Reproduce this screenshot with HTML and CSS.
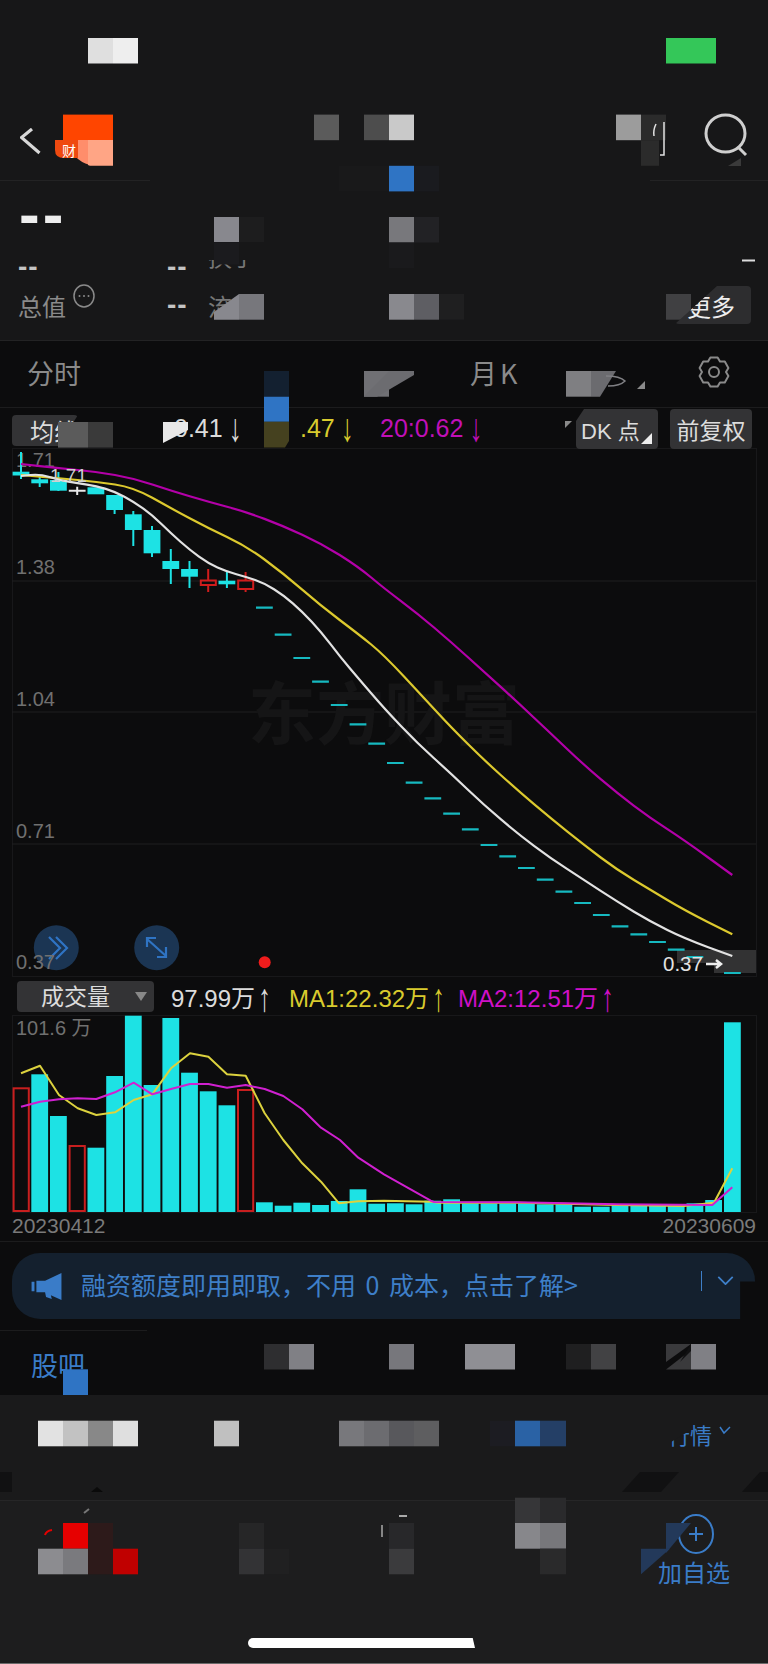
FILE: index.html
```html
<!DOCTYPE html>
<html lang="zh-CN">
<head>
<meta charset="utf-8">
<title>K线</title>
<link rel="stylesheet" href="styles.css">
</head>
<body>
<div class="app">
  <header class="top">
    <div class="status"></div>
    <div class="navbar">
      <svg class="back" viewBox="0 0 22 28"><path d="M12 1 L1.5 9.5 L19.5 25"/></svg>
      <span class="logo-text">财</span>
      <svg class="search" viewBox="0 0 44 44"><ellipse cx="21.5" cy="20.5" rx="19.5" ry="18.5"/><path d="M34 34 L42 42"/></svg>
    </div>
    <div class="quote">
      <div class="price">--</div>
      <div class="qrow first">
        <span class="qlabel qdash">--</span><span class="qval">--</span><span class="qname">换手</span>
      </div>
      <div class="qrow last-row">
        <span class="qlabel">总值<svg class="info" viewBox="0 0 22 24"><ellipse cx="11" cy="12" rx="10" ry="11"/><circle cx="6.5" cy="12" r="1"/><circle cx="11" cy="12" r="1"/><circle cx="15.5" cy="12" r="1"/></svg></span>
        <span class="qval">--</span><span class="qname">流</span>
        <button class="more">更多</button>
      </div>
    </div>
  </header>

  <nav class="tabs">
    <span class="tab">分时</span>
    <span class="tab month">月K</span>
    <svg class="gear" viewBox="0 0 34 32"><path d="M13.4 2.4 L20.6 2.4 L23 6.6 L27.8 6.6 L31.4 12.9 L29 17 L31.4 21.1 L27.8 27.4 L23 27.4 L20.6 31.6 L13.4 31.6 L11 27.4 L6.2 27.4 L2.6 21.1 L5 17 L2.6 12.9 L6.2 6.6 L11 6.6 Z" transform="translate(0,-1)"/><circle cx="17" cy="16" r="5"/></svg>
  </nav>

  <div class="mabar">
    <span class="chip chip-ma">均线</span>
    <span class="ma ma5">0.41<i>↓</i></span>
    <span class="ma ma10">.47<i>↓</i></span>
    <span class="ma ma20">20:0.62<i>↓</i></span>
    <span class="chip chip-dk">DK 点<b class="corner"></b></span>
    <span class="chip chip-fq">前复权</span>
  </div>

  <svg class="price-chart" viewBox="0 448 768 529">
    <rect class="frame" x="12.5" y="448.5" width="744" height="528"/>
    <path class="grid" d="M12 581H756M12 712H756M12 844H756"/>
    <text class="watermark" x="248" y="739">东方财富</text>

    <circle class="fab" cx="56.3" cy="947.7" r="22.5"/>
    <circle class="fab" cx="156.7" cy="947.7" r="22.5"/>
    <path class="fab-icon" d="M49 937L60 948L49 959M56 937L67 948L56 959"/>
    <path class="fab-icon" d="M147 939L166 956M147 947V938H156M166 947V957H157"/>

    <text class="axis" x="16" y="467">1.71</text>
    <text class="axis" x="16" y="574">1.38</text>
    <text class="axis" x="16" y="706">1.04</text>
    <text class="axis" x="16" y="838">0.71</text>
    <text class="axis" x="16" y="969">0.37</text>

    <path class="last-band" d="M677 950H756V973H714V963H677Z"/>

    <g class="wick-up">
      <path d="M21 452V479M39.7 475V487M58.4 472V491M114.6 495V514M133.3 511V546M152 526V557M170.8 549V584M189.5 561V588M226.9 572V588"/>
    </g>
    <g class="body-up">
      <rect x="12.6" y="471.7" width="16.8" height="3.8"/>
      <rect x="31.3" y="479.3" width="16.8" height="4"/>
      <rect x="50" y="480" width="16.8" height="10.7"/>
      <rect x="87.5" y="487.3" width="16.8" height="7"/>
      <rect x="106.2" y="495" width="16.8" height="15"/>
      <rect x="124.9" y="514.3" width="16.8" height="15.7"/>
      <rect x="143.6" y="530" width="16.8" height="23.3"/>
      <rect x="162.4" y="561" width="16.8" height="8"/>
      <rect x="181.1" y="569" width="16.8" height="7.7"/>
      <rect x="218.5" y="580.7" width="16.8" height="3.6"/>
    </g>
    <path class="cross" d="M68.8 490.7H85.6M77.2 486.7V495"/>
    <path class="wick-down" d="M208.2 569V580M208.2 585V592M245.6 572V580M245.6 589V592"/>
    <rect class="body-down" x="200.8" y="580.5" width="15" height="4.5"/>
    <rect class="body-down" x="238.2" y="580.5" width="15" height="8.5"/>
    <path class="dash" d="M256 607.7h16.8M274.7 634.7h16.8M293.4 658h16.8M312.1 681.7h16.8M330.8 705h16.8M349.6 724.3h16.8M368.3 743.7h16.8M387 763h16.8M405.7 782.7h16.8M424.4 798.3h16.8M443.2 813.7h16.8M461.9 829.3h16.8M480.6 845h16.8M499.3 856.3h16.8M518 868h16.8M536.8 879.7h16.8M555.5 891.7h16.8M574.2 903h16.8M592.9 915h16.8M611.6 926.3h16.8M630.4 934.3h16.8M649.1 942h16.8M667.8 949.7h16.8M686.5 957h16.8M724 973h16.8"/>

    <path class="line magenta" d="M21 464 L40 466.2 Q59 468.3 77.7 470 Q96.3 471.7 115 475 Q133.7 478.3 152.3 484.5 Q171 490.7 189.7 496.2 Q208.4 501.7 227 506.7 Q245.7 511.7 264.5 518.9 Q283.3 526 302.2 534.7 Q321 543.3 339.7 555 Q358.3 566.7 371.2 577.5 Q384 588.3 400.7 600.8 Q417.3 613.3 434 627.5 Q450.7 641.7 467.4 656.7 Q484 671.7 500.7 686.9 Q517.3 702 534 717.7 Q550.7 733.3 567.4 749.2 Q584 765 600.7 779.2 Q617.3 793.3 634 805.8 Q650.7 818.3 667.4 829.2 Q684 840 708.2 857.5 L732.3 875"/>
    <path class="line yellow" d="M21 475 L40 476.6 Q59 478.3 77.7 480 Q96.3 481.7 115 484.5 Q133.7 487.3 152.3 497.8 Q171 508.3 189.7 518.3 Q208.4 528.3 227 537 Q245.7 545.7 264.5 559.5 Q283.3 573.3 302.2 589.7 Q321 606 339.7 620 Q358.3 634 371.2 644.5 Q384 655 404 676.5 Q424 698 437.4 712.5 Q450.7 727 467.4 743.5 Q484 760 500.7 775 Q517.3 790 534 804.2 Q550.7 818.3 567.4 831.7 Q584 845 600.7 857.5 Q617.3 870 634 880 Q650.7 890 667.4 900 Q684 910 708.2 922.2 L732.3 934.3"/>
    <path class="line white" d="M21 476 L30.5 475 Q40 474 49.5 477 Q59 480 68.4 481.7 Q77.7 483.3 87 484.7 Q96.3 486 105.7 488.9 Q115 491.7 124.4 496.7 Q133.7 501.7 143 508.4 Q152.3 515 161.7 524.2 Q171 533.3 180.5 541.7 Q190 550 199 556.7 Q208 563.3 217.5 567.5 Q227 571.7 236.4 574.2 Q245.7 576.7 255.2 580 Q264.7 583.3 274 589.2 Q283.3 595 292.8 603.4 Q302.3 611.7 311.7 621.7 Q321 631.7 330.5 644.2 Q340 656.7 349.2 667.5 Q358.3 678.3 371.2 693.3 Q384 708.3 400.7 725.8 Q417.3 743.3 434 758.3 Q450.7 773.3 467.4 789.2 Q484 805 500.7 819.2 Q517.3 833.3 534 845.8 Q550.7 858.3 567.4 869.2 Q584 880 600.7 890.9 Q617.3 901.7 634 911.7 Q650.7 921.7 667.4 930 Q684 938.3 708.2 947.2 L732.3 956"/>

    <text class="axis-high" x="50" y="482">1.71</text>

    <text class="last" x="663" y="971">0.37</text>
    <path class="last-arrow" d="M706 964H720M716 960L721 964L716 968"/>
    <circle class="dot" cx="264.7" cy="962.3" r="6"/>
  </svg>

  <div class="volbar">
    <span class="chip chip-vol">成交量<b class="caret"></b></span>
    <span class="vol v1">97.99万<i>↑</i></span>
    <span class="vol v2">MA1:22.32万<i>↑</i></span>
    <span class="vol v3">MA2:12.51万<i>↑</i></span>
  </div>

  <svg class="vol-chart" viewBox="0 1015 768 226">
    <rect class="frame" x="12.5" y="1015.5" width="744" height="197"/>
    <text class="axis" x="16" y="1035">101.6 万</text>
    <g class="bar">
      <rect x="31.3" y="1074.3" width="16.8" height="137.7"/>
      <rect x="50" y="1116" width="16.8" height="96"/>
      <rect x="87.5" y="1147.7" width="16.8" height="64.3"/>
      <rect x="106.2" y="1076" width="16.8" height="136"/>
      <rect x="124.9" y="1015.7" width="16.8" height="196.3"/>
      <rect x="143.6" y="1085" width="16.8" height="127"/>
      <rect x="162.4" y="1018" width="16.8" height="194"/>
      <rect x="181.1" y="1072.7" width="16.8" height="139.3"/>
      <rect x="199.8" y="1091.3" width="16.8" height="120.7"/>
      <rect x="218.5" y="1105.3" width="16.8" height="106.7"/>
      <rect x="256" y="1202.3" width="16.8" height="9.7"/>
      <rect x="274.7" y="1205.7" width="16.8" height="6.3"/>
      <rect x="293.4" y="1202.7" width="16.8" height="9.3"/>
      <rect x="312.1" y="1205" width="16.8" height="7"/>
      <rect x="330.8" y="1201" width="16.8" height="11"/>
      <rect x="349.6" y="1189.3" width="16.8" height="22.7"/>
      <rect x="368.3" y="1203.7" width="16.8" height="8.3"/>
      <rect x="387" y="1203.3" width="16.8" height="8.7"/>
      <rect x="405.7" y="1204.3" width="16.8" height="7.7"/>
      <rect x="424.4" y="1200.7" width="16.8" height="11.3"/>
      <rect x="443.2" y="1199.3" width="16.8" height="12.7"/>
      <rect x="461.9" y="1203.3" width="16.8" height="8.7"/>
      <rect x="480.6" y="1203.3" width="16.8" height="8.7"/>
      <rect x="499.3" y="1203.3" width="16.8" height="8.7"/>
      <rect x="518" y="1203.3" width="16.8" height="8.7"/>
      <rect x="536.8" y="1204.3" width="16.8" height="7.7"/>
      <rect x="555.5" y="1204.3" width="16.8" height="7.7"/>
      <rect x="574.2" y="1206.7" width="16.8" height="5.3"/>
      <rect x="592.9" y="1206.7" width="16.8" height="5.3"/>
      <rect x="611.6" y="1205" width="16.8" height="7"/>
      <rect x="630.4" y="1205" width="16.8" height="7"/>
      <rect x="649.1" y="1205.7" width="16.8" height="6.3"/>
      <rect x="667.8" y="1205" width="16.8" height="7"/>
      <rect x="686.5" y="1203.3" width="16.8" height="8.7"/>
      <rect x="705.2" y="1200" width="16.8" height="12"/>
      <rect x="724" y="1022.3" width="16.8" height="189.7"/>
    </g>
    <g class="bar-down">
      <rect x="13.6" y="1088.3" width="15.2" height="122.7"/>
      <rect x="69.6" y="1146" width="15.2" height="65"/>
      <rect x="238" y="1090" width="15.2" height="121"/>
    </g>
    <polyline class="vline vyellow" points="21,1073.3 40,1065.7 59,1095 77.7,1108.3 96.3,1115 115,1112.3 133.7,1100 152.3,1094.3 171,1068.3 190,1053.3 208.4,1056.7 227,1074.3 245.7,1075.7 264.7,1113.3 283.3,1140 302.3,1163.3 321,1181.7 339,1203.3 358.3,1201.3 384,1200.7 430.7,1201.7 439,1202.7 517,1202.7 617,1205 684,1206 714,1202.7 732.3,1168.3"/>
    <polyline class="vline vmagenta" points="21,1106.7 40,1101.7 59,1099.3 77.7,1098.3 96.3,1099 115,1092.3 133.7,1082.7 152.3,1094.3 171,1089 190,1084 208.4,1084 227,1087.7 245.7,1085 264.7,1089 283.3,1096 302.3,1109.3 321,1127.7 340,1140 358.3,1157.7 384,1174.3 430.7,1200.7 434,1202 517,1202.3 617,1204.3 712.3,1205 732.3,1187.3"/>
    <text class="date" x="12" y="1233">20230412</text>
    <text class="date" x="756" y="1233" text-anchor="end">20230609</text>
  </svg>

  <div class="banner-wrap">
    <div class="banner">
      <svg class="speaker" viewBox="0 0 32 28"><path d="M0 9H3V19H0Z M5 8H14L31 0V28L20 23L21 27L15 25L14 20H5Z"/></svg>
      <span class="banner-text">融资额度即用即取，不用 0 成本，点击了解&gt;</span>
      <span class="banner-sep"></span>
      <svg class="banner-chev" viewBox="0 0 18 10"><path d="M1 1L9 9L17 1"/></svg>
    </div>
  </div>

  <section class="forum"><span class="forum-title">股吧</span></section>

  <section class="panel"><span class="panel-link">行情</span></section>

  <footer class="tabbar">
    <div class="fav">
      <svg class="fav-icon" viewBox="0 0 36 40"><ellipse cx="18" cy="20" rx="17" ry="19"/><path d="M18 13V27M11 20H25"/></svg>
      <span class="fav-label">加自选</span>
    </div>
    <div class="home"></div>
  </footer>

  <svg class="mosaic" viewBox="0 0 768 1664">
    <rect x="88" y="38" width="25" height="25.5" fill="#dfdfdf"/>
    <rect x="113" y="38" width="25" height="25.5" fill="#eeeeee"/>
    <rect x="666" y="38" width="50" height="25.5" fill="#34c759"/>

    <rect x="63" y="114.6" width="50" height="25.6" fill="#ff4500"/>
    <path d="M63 140H88V165H90Q80 162 76 157L63 155Z" fill="#ff8d6b"/>
    <path d="M88 140H113V165.8H90Q88 165 88 165Z" fill="#ffa585"/>
    <path d="M55 140H78V158H64Q55 158 55 150Z" fill="#ef4a10"/>
    <rect x="314" y="114.6" width="25" height="25.6" fill="#5b5b5b"/>
    <rect x="364" y="114.6" width="25" height="25.6" fill="#4d4d4d"/>
    <rect x="389" y="114.6" width="25" height="25.6" fill="#c9c9c9"/>
    <rect x="616" y="114.6" width="25" height="25.6" fill="#9c9c9c"/>
    <rect x="641" y="114.6" width="25" height="25.6" fill="#2b2b2b"/>
    <rect x="641" y="140.2" width="18" height="25.6" fill="#2b2b2b"/>
    <path d="M656 124Q653 130 654 136M664 122V155H660" fill="none" stroke="#e2e2e2" stroke-width="1.5"/>
    <path d="M728 166L741 158V166Z" fill="#3a3a3a"/>
    <rect x="150" y="178" width="500" height="5" fill="#171718"/>
    <rect x="339" y="165.8" width="50" height="25.6" fill="#19191a"/>
    <rect x="389" y="165.8" width="25" height="25.6" fill="#2f74c4"/>
    <rect x="414" y="165.8" width="25" height="25.6" fill="#1a1b1f"/>

    <rect x="214" y="217" width="25" height="25.5" fill="#88888e"/>
    <rect x="239" y="217" width="25" height="25.5" fill="#1d1d1e"/>
    <rect x="389" y="217" width="25" height="25.5" fill="#78787c"/>
    <rect x="414" y="217" width="25" height="25.5" fill="#222225"/>
    <rect x="389" y="242.5" width="25" height="25.5" fill="#1a1a1c"/>
    <rect x="205" y="242" width="60" height="18" fill="#171718"/>
    <rect x="214" y="242.5" width="25" height="22" fill="#1b1b1e"/>
    <rect x="742" y="259.5" width="13" height="2" fill="#dddddd"/>

    <path d="M214 312L239 294V319.7H214Z" fill="#88888e"/>
    <rect x="239" y="294" width="25" height="25.7" fill="#77777c"/>
    <rect x="389" y="294" width="25" height="25.7" fill="#89898e"/>
    <rect x="414" y="294" width="25" height="25.7" fill="#5e5e63"/>
    <rect x="439" y="294" width="25" height="25.7" fill="#1f1f20"/>
    <rect x="666" y="294" width="25" height="25.7" fill="#404042"/>

    <rect x="264" y="371" width="25" height="25.7" fill="#132030"/>
    <rect x="264" y="396.7" width="25" height="25.1" fill="#2f74c4"/>
    <path d="M264 421.8H289V441L285 447.4H264Z" fill="#45411f"/>
    <path d="M364 396.7V371H389V396.7Z" fill="#707074"/>
    <path d="M389 371H414V375L377 396.7H364V396Z" fill="#6c6c70"/>
    <path d="M566 371H591V396.7H566Z" fill="#7f7f82"/>
    <path d="M591 371H616L600 396.7H591Z" fill="#6b6b6f"/>
    <path d="M606 376Q620 376 625 381Q620 386 608 386" fill="none" stroke="#808084" stroke-width="1.5"/>
    <path d="M637 389L645 381V389Z" fill="#8a8a8a"/>

    <rect x="58" y="422" width="30" height="25.6" fill="#5b5b5b"/>
    <rect x="88" y="422" width="25" height="25.6" fill="#3a3a3a"/>
    <path d="M163 422H188V430L163 443Z" fill="#e8e8e8"/>
    <path d="M565 428V421H572Z" fill="#8a8a8a"/>

    <rect x="63" y="1369.3" width="25" height="25.7" fill="#2f74c4"/>
    <rect x="264" y="1344" width="25" height="25.5" fill="#2e2e30"/>
    <rect x="289" y="1344" width="25" height="25.5" fill="#808085"/>
    <rect x="389" y="1344" width="25" height="25.5" fill="#77777c"/>
    <rect x="465" y="1344" width="50" height="25.5" fill="#8f8f94"/>
    <rect x="566" y="1344" width="25" height="25.5" fill="#1f1f20"/>
    <rect x="591" y="1344" width="25" height="25.5" fill="#424244"/>
    <path d="M666 1369.5L691 1350V1369.5Z" fill="#3a3a3c"/>
    <path d="M666 1344H691L666 1362Z" fill="#3a3a3c"/>
    <path d="M691 1344H698L680 1362Z" fill="#111112"/>
    <rect x="691" y="1344" width="25" height="25.5" fill="#808085"/>

    <rect x="38" y="1420.7" width="25" height="25.6" fill="#e2e2e2"/>
    <rect x="63" y="1420.7" width="25" height="25.6" fill="#c2c2c2"/>
    <rect x="88" y="1420.7" width="25" height="25.6" fill="#888888"/>
    <rect x="113" y="1420.7" width="25" height="25.6" fill="#dfdfdf"/>
    <rect x="214" y="1420.7" width="25" height="25.6" fill="#c0c0c0"/>
    <rect x="339" y="1420.7" width="25" height="25.6" fill="#78787c"/>
    <rect x="364" y="1420.7" width="25" height="25.6" fill="#6c6c70"/>
    <rect x="389" y="1420.7" width="25" height="25.6" fill="#58585c"/>
    <rect x="414" y="1420.7" width="25" height="25.6" fill="#5e5e60"/>
    <rect x="490" y="1420.7" width="25" height="25.6" fill="#1c1c22"/>
    <rect x="515" y="1420.7" width="25" height="25.6" fill="#2a62a5"/>
    <rect x="540" y="1420.7" width="26" height="25.6" fill="#243f66"/>
    <path d="M666 1422H691V1430L671 1442H666Z" fill="#1a1a1b"/>
    <path d="M720 1427L724 1433L730 1427" fill="none" stroke="#3a7cc8" stroke-width="1.5"/>

    <path d="M622 1492L640 1472H679L661 1492Z" fill="#111112"/>
    <path d="M742 1492L760 1472H768V1492Z" fill="#111112"/>
    <rect x="0" y="1472" width="12" height="20" fill="#111112"/>
    <path d="M91 1492L97 1487L103 1492Z" fill="#0a0a0a"/>

    <rect x="63" y="1523" width="25" height="25.7" fill="#e60000"/>
    <rect x="88" y="1523" width="25" height="51.3" fill="#2d1a1a"/>
    <rect x="38" y="1548.7" width="25" height="25.6" fill="#8c8c90"/>
    <rect x="63" y="1548.7" width="25" height="25.6" fill="#7a7a7e"/>
    <rect x="113" y="1548.7" width="25" height="25.6" fill="#c00000"/>
    <path d="M45 1535Q46 1531 52 1530" fill="none" stroke="#e60000" stroke-width="2"/>
    <path d="M84 1513L89 1509" fill="none" stroke="#777777" stroke-width="2"/>
    <rect x="239" y="1523" width="25" height="25.7" fill="#262627"/>
    <rect x="239" y="1548.7" width="25" height="25.6" fill="#333335"/>
    <rect x="264" y="1548.7" width="25" height="25.6" fill="#202021"/>
    <rect x="389" y="1523" width="25" height="25.7" fill="#28282a"/>
    <rect x="389" y="1548.7" width="25" height="25.6" fill="#3b3b3d"/>
    <path d="M382 1525V1537" fill="none" stroke="#aaaaaa" stroke-width="1.5"/>
    <path d="M399 1516H407" fill="none" stroke="#aaaaaa" stroke-width="2"/>
    <rect x="515" y="1497.7" width="25" height="25.3" fill="#363638"/>
    <rect x="540" y="1497.7" width="26" height="25.3" fill="#2a2a2c"/>
    <rect x="515" y="1523" width="25" height="25.7" fill="#87878b"/>
    <rect x="540" y="1523" width="26" height="25.7" fill="#77777b"/>
    <rect x="540" y="1548.7" width="26" height="25.6" fill="#2a2a2b"/>
    <path d="M666 1523H691L666 1553Z" fill="#23395a"/>
    <path d="M641 1548.7H670L641 1574.3Z" fill="#23395a"/>
  </svg>
</div>
</body>
</html>
```

FILE: styles.css
```css
* { box-sizing: border-box; margin: 0; padding: 0; }
html, body { background: #0c0c0d; }
body { width: 768px; height: 1664px; overflow: hidden; font-family: "Liberation Sans", "Noto Sans CJK SC", sans-serif; }

.app { position: relative; width: 768px; height: 1664px; display: flex; flex-direction: column; background: #0c0c0d; overflow: hidden; }
i { font-style: normal; }

.top { height: 341px; background: #171718; border-bottom: 1px solid #232324; flex: none; }
.status { height: 100px; }
.navbar { height: 81px; border-bottom: 1px solid #232324; display: flex; align-items: flex-start; padding: 28px 0 0 20px; position: relative; }
.back { width: 22px; height: 28px; fill: none; stroke: #d8d8d8; stroke-width: 3.2; }
.logo-text { position: relative; z-index: 2; color: #fff; font-size: 14px; line-height: 18px; margin: 13px 0 0 20px; font-family: "Noto Sans CJK SC", sans-serif; }
.search { width: 44px; height: 44px; margin: -15px 20px 0 auto; fill: none; stroke: #cfcfcf; stroke-width: 3; }

.quote { padding: 0 18px; }
.price { color: #eee; font-size: 62px; font-weight: 700; line-height: 60px; letter-spacing: 3px; margin-top: 3px; height: 60px; margin-left: 1px; }
.qrow { display: flex; align-items: center; color: #8a8a8a; }
.qrow.first { height: 46px; }
.qrow.last-row { height: 30px; }
.qlabel { width: 149px; font-family: "Noto Sans CJK SC", sans-serif; font-size: 24px; display: flex; align-items: flex-start; }
.qdash { font-family: "Liberation Sans", sans-serif; font-weight: 700; font-size: 28px; color: #c4c4c4; letter-spacing: 1px; }
.info { width: 22px; height: 24px; margin: -4px 0 0 7px; fill: none; stroke: #8a8a8a; stroke-width: 1.5; }
.info circle { fill: #8a8a8a; stroke: none; }
.qval { width: 41px; font-size: 28px; letter-spacing: 1px; color: #c4c4c4; font-weight: 700; }
.qname { font-family: "Noto Sans CJK SC", sans-serif; font-size: 24px; color: #777; }
.first .qname { align-self: flex-start; line-height: 24px; }
.more { position: relative; z-index: 2; margin-left: auto; margin-right: -1px; width: 76px; height: 38px; border: 0; border-radius: 4px; background: #2d2d2f; color: #eee; font-family: "Noto Sans CJK SC", sans-serif; font-size: 24px; text-align: right; padding-right: 16px; clip-path: polygon(42px 0, 100% 0, 100% 100%, 0 100%); }

.tabs { height: 67px; border-bottom: 1px solid #1c1c1d; display: flex; align-items: center; padding: 0 0 4px 27px; flex: none; color: #8a8a8a; }
.tab { font-family: "Noto Sans CJK SC", sans-serif; font-size: 27px; }
.month { margin-left: 389px; letter-spacing: 3px; }
.gear { width: 34px; height: 32px; margin-left: auto; margin-right: 37px; fill: none; stroke: #8a8a8a; stroke-width: 2; stroke-linejoin: round; }

.mabar { height: 40px; display: flex; align-items: center; flex: none; position: relative; }
.chip { display: flex; align-items: center; justify-content: center; background: #333335; color: #dcdcdc; font-family: "Liberation Sans", "Noto Sans CJK SC", sans-serif; border-radius: 4px; flex: none; }
.chip-ma { width: 66px; height: 31px; margin: 5px 0 0 12px; font-size: 24px; justify-content: flex-start; padding-left: 18px; white-space: nowrap; clip-path: polygon(0 0, 100% 0, 70% 100%, 0 100%); }
.ma { font-size: 25px; white-space: nowrap; flex: none; }
.ma i { display: inline-block; font-size: 26px; margin-left: 6px; transform: scale(1, 1.5); }
.ma5 { color: #dcdcdc; margin-left: 96px; width: 126px; }
.ma10 { color: #d9cb2e; width: 80px; }
.ma20 { color: #c010b8; }
.chip-dk { position: absolute; left: 576px; top: 1px; width: 82px; height: 40px; font-size: 22px; justify-content: flex-start; padding-left: 5px; clip-path: polygon(8px 0, 100% 0, 100% 100%, 0 100%, 0 12px); }
.corner { position: absolute; right: 6px; bottom: 5px; width: 0; height: 0; border-left: 11px solid transparent; border-bottom: 11px solid #eee; }
.chip-fq { position: absolute; left: 670px; top: 1px; width: 82px; height: 40px; font-size: 23px; }

.price-chart { display: block; width: 768px; height: 529px; flex: none; }
.frame { fill: none; stroke: #18181a; stroke-width: 1; }
.grid { fill: none; stroke: #1f1f20; stroke-width: 1.2; }
.watermark { font-family: "Noto Sans CJK SC", sans-serif; font-weight: 700; font-size: 68px; fill: #151516; }
.axis { font-family: "Liberation Sans", "Noto Sans CJK SC", sans-serif; font-size: 20px; fill: #707070; }
.axis-high { font-family: "Liberation Sans", sans-serif; font-size: 19px; fill: #d0d0d0; }
.wick-up path { fill: none; stroke: #1de2e4; stroke-width: 2; }
.body-up rect { fill: #1de2e4; }
.cross { fill: none; stroke: #e8e8e8; stroke-width: 2; }
.wick-down { fill: none; stroke: #d01c1c; stroke-width: 2; }
.body-down { fill: none; stroke: #d01c1c; stroke-width: 2; }
.dash { fill: none; stroke: #16b9c0; stroke-width: 2.2; }
.line { fill: none; stroke-width: 2.2; stroke-linejoin: round; }
.magenta { stroke: #b300a8; }
.yellow { stroke: #dcc92e; }
.white { stroke: #e2e2e2; }
.last-band { fill: #323233; }
.last { font-family: "Liberation Sans", sans-serif; font-size: 20.5px; fill: #e2e2e2; }
.last-arrow { fill: none; stroke: #eee; stroke-width: 2.5; }
.fab { fill: #1b3553; }
.fab-icon { fill: none; stroke: #2f74c4; stroke-width: 2.2; }
.dot { fill: #f01c1c; }

.volbar { height: 38px; display: flex; align-items: center; flex: none; padding: 0 0 0 17px; }
.chip-vol { position: relative; width: 137px; height: 31px; font-size: 23px; justify-content: flex-start; padding: 0 0 2px 24px; }
.caret { position: absolute; right: 7px; top: 11px; width: 0; height: 0; border-left: 6px solid transparent; border-right: 6px solid transparent; border-top: 9px solid #888; }
.vol { font-size: 24px; white-space: nowrap; flex: none; }
.vol i { display: inline-block; font-size: 26px; margin-left: 3px; transform: scale(1, 1.5); }
.v1 { color: #dcdcdc; margin-left: 17px; width: 118px; }
.v2 { color: #d9cb2e; width: 169px; }
.v3 { color: #d010c8; }

.vol-chart { display: block; width: 768px; height: 226px; flex: none; }
.bar rect { fill: #1de2e4; }
.bar-down rect { fill: none; stroke: #c81f1f; stroke-width: 2; }
.vline { fill: none; stroke-width: 2; stroke-linejoin: round; }
.vyellow { stroke: #dcd23e; }
.vmagenta { stroke: #d020d0; }
.date { font-family: "Liberation Sans", sans-serif; font-size: 21px; fill: #7a7a7a; }

.banner-wrap { height: 89px; border-top: 1px solid #1c1c1d; padding: 11px 13px 0 12px; flex: none; position: relative; }
.banner { height: 66px; width: 743px; background: #14202e; border-radius: 28px 28px 0 28px; display: flex; align-items: center; padding-left: 19px; clip-path: polygon(0 0, 100% 0, 100% 43%, 98% 43%, 98% 100%, 0 100%); }
.speaker { width: 32px; height: 27px; fill: #3a7cc8; flex: none; }
.banner-text { color: #3e7fc8; font-family: "Noto Sans CJK SC", sans-serif; font-size: 25px; word-spacing: 4px; line-height: 30px; margin: -4px 0 0 18px; white-space: nowrap; }
.banner-sep { width: 1.5px; height: 20px; background: #3e7fc8; margin-left: auto; margin-top: -10px; }
.banner-chev { width: 17px; height: 9px; margin: -12px 21px 0 15px; fill: none; stroke: #3e7fc8; stroke-width: 2; flex: none; }

.forum { height: 65px; padding: 15px 0 0 31px; flex: none; position: relative; }
.forum::before { content: ""; position: absolute; left: 0; top: 0; width: 147px; height: 1px; background: #1c1c1d; }
.forum-title { color: #3a7cc8; font-family: "Noto Sans CJK SC", sans-serif; font-size: 27px; }

.panel { height: 105px; background: #1a1a1b; flex: none; display: flex; justify-content: flex-end; padding: 24px 56px 0 0; }
.panel-link { color: #3a7cc8; font-family: "Noto Sans CJK SC", sans-serif; font-size: 22px; line-height: 30px; height: 30px; }

.tabbar { flex: 1; background: #1d1d1e; border-top: 1px solid #262627; border-bottom: 1px solid #6a6a6a; position: relative; }
.fav { display: flex; flex-direction: column; align-items: center; width: 72px; margin: 13px 0 0 658px; }
.fav-icon { width: 36px; height: 40px; margin-left: 4px; fill: none; stroke: #3a7cc8; stroke-width: 2; }
.fav-label { color: #3a7cc8; font-family: "Noto Sans CJK SC", sans-serif; font-size: 24px; line-height: 30px; white-space: nowrap; margin-top: 3px; }
.home { position: absolute; left: 248px; bottom: 15px; width: 227px; height: 10px; background: #fff; border-radius: 5px 0 0 5px; clip-path: polygon(0 0, 99% 0, 100% 100%, 0 100%); }

.mosaic { position: absolute; left: 0; top: 0; width: 768px; height: 1664px; pointer-events: none; z-index: 1; }
```
